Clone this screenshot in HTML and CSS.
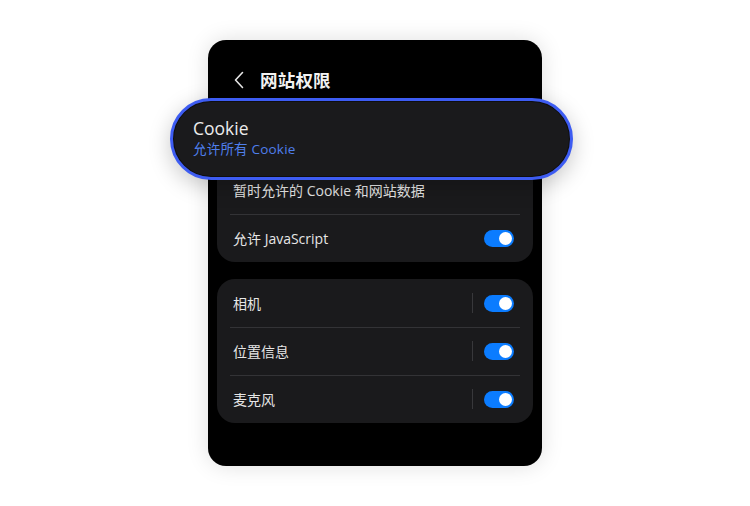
FILE: index.html
```html
<!DOCTYPE html>
<html lang="zh-CN">
<head>
<meta charset="utf-8">
<link rel="stylesheet" href="styles.css">
</head>
<body>
<div class="stage">
  <div class="phone">
    <div class="header">
      <svg class="back" width="12" height="18" viewBox="0 0 12 18"><path d="M9.5 1.5 L2.5 9 L9.5 16.5" fill="none" stroke="#e6e6e6" stroke-width="1.6" stroke-linecap="round" stroke-linejoin="round"/></svg>
      <span class="title">网站权限</span>
    </div>
    <div class="card first">
      <div class="row"></div>
      <div class="row"><span class="label">暂时允许的 Cookie 和网站数据</span></div>
      <div class="row"><span class="label">允许 JavaScript</span><span class="toggle"></span></div>
      <div class="pill">
        <span class="pill-title">Cookie</span>
        <span class="pill-sub">允许所有 Cookie</span>
      </div>
    </div>
    <div class="card">
      <div class="row"><span class="label">相机</span><span class="vsep"></span><span class="toggle"></span></div>
      <div class="row"><span class="label">位置信息</span><span class="vsep"></span><span class="toggle"></span></div>
      <div class="row"><span class="label">麦克风</span><span class="vsep"></span><span class="toggle"></span></div>
    </div>
  </div>
</div>
</body>
</html>
```

FILE: styles.css
```css
html, body {
  margin: 0;
  padding: 0;
  background: #ffffff;
  width: 750px;
  height: 506px;
  overflow: hidden;
}
body {
  font-family: "Open Sans", "Noto Sans CJK SC", sans-serif;
  -webkit-font-smoothing: antialiased;
}
.stage {
  display: flex;
  justify-content: center;
  padding-top: 40px;
}
.phone {
  width: 334px;
  height: 426px;
  background: #000;
  border-radius: 18px;
  box-shadow: 0 0 22px rgba(0, 0, 0, 0.13);
  box-sizing: border-box;
  padding: 0 9px;
  display: flex;
  flex-direction: column;
}
.header {
  display: flex;
  align-items: center;
  padding-left: 16px;
  box-sizing: border-box;
  height: 79px;
}
.back {
  display: block;
  margin-right: 15px;
}
.title {
  font-family: "Noto Sans CJK SC", sans-serif;
  color: #f2f2f2;
  font-size: 17.5px;
  font-weight: 700;
  letter-spacing: 0.2px;
}
.card {
  position: relative;
  background: #1a1a1c;
  border-radius: 18px;
  display: flex;
  flex-direction: column;
  margin-bottom: 17px;
}
.card.first {
  margin-top: -1px;
}
.row {
  height: 48px;
  display: flex;
  align-items: center;
  padding: 0 19px 0 16px;
  position: relative;
}
.row + .row::before {
  content: "";
  position: absolute;
  left: 13px;
  right: 13px;
  top: 0;
  height: 1px;
  background: #333336;
}
.label {
  flex: 1;
  color: #e6e6e6;
  font-size: 14px;
}
.vsep {
  width: 1px;
  height: 20px;
  background: #38383b;
  margin-right: 11px;
}
.toggle {
  position: relative;
  width: 30px;
  height: 17px;
  border-radius: 9px;
  background: #0b7cff;
}
.toggle::after {
  content: "";
  position: absolute;
  right: 2px;
  top: 2px;
  width: 13px;
  height: 13px;
  border-radius: 50%;
  background: #fff;
}
.pill {
  position: absolute;
  left: -47px;
  top: -20px;
  width: 403px;
  height: 82px;
  box-sizing: border-box;
  border-radius: 41px;
  border: 3px solid #3d5cf2;
  background: #1a1a1c;
  box-shadow: inset 0 0 0 1px #0e0e10, 0 6px 22px rgba(0, 0, 0, 0.22);
  display: flex;
  flex-direction: column;
  justify-content: center;
  padding-left: 20px;
  padding-bottom: 3px;
}
.pill-title {
  color: #ececec;
  font-size: 17.5px;
  line-height: 22px;
}
.pill-sub {
  color: #4f7fec;
  font-size: 13.5px;
  line-height: 20px;
  letter-spacing: 0.2px;
}
```
